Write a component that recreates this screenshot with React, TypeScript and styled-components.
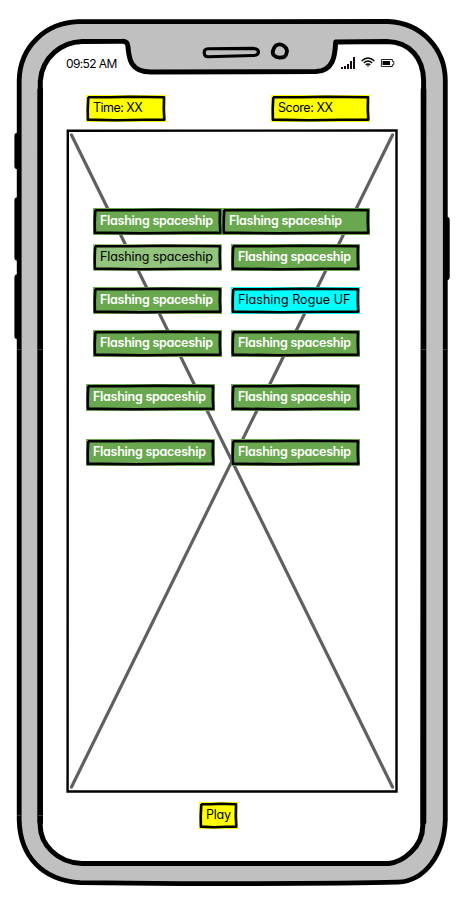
import React from "react";
import styled, { createGlobalStyle } from "styled-components";

const GlobalStyle = createGlobalStyle`
  body {
    margin: 0;
    background: #ffffff;
  }
  * {
    box-sizing: border-box;
  }
`;

const Phone = styled.main`
  position: relative;
  isolation: isolate;
  width: 471px;
  height: 911px;
  overflow: hidden;
  padding: 54px 73px 0 66px;
  display: flex;
  flex-direction: column;
  color: #000;
  font-family: Inter, "Liberation Sans", sans-serif;
  font-feature-settings: "cv11";
  font-size: 12.5px;
  line-height: 18px;
`;

const Backdrop = styled.svg`
  position: absolute;
  inset: 0;
  z-index: -1;
  width: 100%;
  height: 100%;
`;

const StatusBar = styled.header`
  display: flex;
  justify-content: space-between;
  height: 18px;
  margin-right: 3px;
`;

const Clock = styled.time`
  padding-top: 1px;
  font-size: 12px;
  letter-spacing: -0.62px;
`;

const StatusIcons = styled.div`
  display: flex;
  align-items: flex-start;
  gap: 5.5px;
  padding-top: 3px;
`;

const Readouts = styled.div`
  display: flex;
  justify-content: space-between;
  margin: 23px 28px 7px 20px;
`;

const Field = styled.section`
  position: relative;
  isolation: isolate;
  width: 332px;
  height: 664px;
  padding-top: 79px;
`;

const FleetRow = styled.div<{ $left: number; $gap: number; $after: number }>`
  display: flex;
  gap: ${(p) => p.$gap}px;
  margin: 0 0 ${(p) => p.$after}px ${(p) => p.$left}px;
`;

const LabelBox = styled.div<{ $fill: string; $width: number; $light?: boolean; $spacing: number }>`
  position: relative;
  isolation: isolate;
  flex: none;
  width: ${(p) => p.$width}px;
  height: 27px;
  padding: 4px 0 0 7px;
  background: ${(p) => p.$fill};
  color: ${(p) => (p.$light ? "#fff" : "#000")};
  font-weight: ${(p) => (p.$light ? 600 : 400)};
  letter-spacing: ${(p) => p.$spacing}px;
  white-space: nowrap;
`;

const Footer = styled.footer`
  display: flex;
  margin: 9px 0 0 133px;
`;

const GREEN = "#6aa84f";
const YELLOW = "#ffff00";

type LabelProps = {
  text: string;
  fill: string;
  width: number;
  light?: boolean;
  spacing: number;
};

function Label({ text, fill, width: w, light, spacing }: LabelProps) {
  return (
    <LabelBox $fill={fill} $width={w} $light={light} $spacing={spacing}>
      <Backdrop viewBox={`0 0 ${w} 27`} fill="none" stroke="#000" strokeWidth="2.6" strokeLinejoin="round">
        <path d={`M2 2.2 L${w * 0.3} 2.2 L${w * 0.55} 1.7 L${w - 2} 2.2 Q${w - 2.6} 14 ${w - 1.7} 24.6 L${w * 0.72} 24.7 L${w * 0.38} 25.3 L1.9 24.6 Q1.4 14 2.3 2.2`} />
      </Backdrop>
      {text}
    </LabelBox>
  );
}

const ship: LabelProps = { text: "Flashing spaceship", fill: GREEN, width: 129, light: true, spacing: -0.27 };
const fleet = [
  { left: 27, gap: 0, after: 9, items: [ship, { ...ship, width: 148 }] },
  { left: 27, gap: 9, after: 16, items: [{ ...ship, fill: "#93c47d", light: false, spacing: -0.1 }, ship] },
  { left: 27, gap: 9, after: 16, items: [ship, { text: "Flashing Rogue UF", fill: "#00ffff", width: 129, spacing: 0.06 }] },
  { left: 27, gap: 9, after: 27, items: [ship, ship] },
  { left: 20, gap: 16, after: 28, items: [ship, ship] },
  { left: 20, gap: 16, after: 0, items: [ship, ship] },
];

function PhoneOutline() {
  return (
    <Backdrop viewBox="0 0 471 911" stroke="#000" strokeLinejoin="round">
      <path
        d="M78 21.7 L388 21.5 C423 23 445 50 445.3 80 L445.3 820 C444 856 424 881 398 882.2 C350 883.5 250 883.7 180 883.6 L80 882.7 C42 880 20 856 19.2 820 L19.2 80 C20 47 45 23 78 21.7Z"
        fill="#c0c0c0"
        strokeWidth="4.8"
      />
      <path
        d="M82 41.5 L122 41.3 Q128 41 128 47 C129 58 130 72 151 72 L316 71.6 C333 71 335 57 335.7 42 L387 41.5 C411 42 423 59 423.6 80 L422.8 825 C423 848 402 862 389 863.5 L82 863.5 C57 863 40.5 844 40.2 826 L40.3 81 C42 57 62 42 82 41.5Z"
        fill="#fff"
        strokeWidth="5"
      />
      <path d="M40.2 90 V822 M423.5 90 V822" fill="none" strokeWidth="5.6" strokeLinecap="round" />
      <path d="M17.6 136 V166 M17.6 200.5 V257.5 M17.6 277.5 V336 M446.5 220 V277" fill="none" strokeWidth="6.4" strokeLinecap="round" />
      <path d="M208 48.8 L253 48.4 Q258.5 48.5 258.5 52 Q258.5 55.5 253 55.5 L208 56.8 Q204.3 56.7 204.2 52.7 Q204.1 49 208 48.8Z" fill="#c0c0c0" strokeWidth="3.1" />
      <path d="M278 44.6 C282 43.8 287 47 287 51.5 C286 57 284 57.6 279.5 57.6 C275 57.6 271.8 54.5 273 50.5 C274 47.5 275 45 278 44.6Z" fill="#c0c0c0" strokeWidth="3.8" />
      <path d="M17 349.5 H21.5 M38 349.5 H43 M17 815.5 H21.5 M38 815.5 H43 M421 349.5 H426 M443 349.5 H447.5" fill="none" stroke="#444" strokeWidth=".8" />
    </Backdrop>
  );
}

export default function App() {
  return (
    <>
      <GlobalStyle />
      <Phone>
        <PhoneOutline />
        <StatusBar>
          <Clock>09:52 AM</Clock>
          <StatusIcons>
            <svg width="15" height="13" viewBox="0 0 15 13" fill="#160818">
              <path d="M1 10h2v2H1zM4 9h2v3H4zM7 7h2v5H7zM10 4h2v8h-2zM13 0h2v12h-2z" />
            </svg>
            <svg width="14" height="11" viewBox="0 0 14 11" fill="none" stroke="#000" strokeWidth="1.4">
              <path d="M.6 4 Q7-2 13.4 4 M2.8 6.1 Q7 2 11.2 6.1 M4.8 8.1 Q7 6 9.2 8.1" />
              <path d="M5.8 8.5h2.4L7 10z" fill="#000" stroke="none" />
            </svg>
            <svg width="15" height="12" viewBox="0 0 15 12">
              <path d="M1.4 2.5H12.4V4.5H13.8V7.7H12.4V9.5H1.4Z" fill="none" stroke="#222" />
              <path d="M2.5 4H10V8H2.5Z" />
            </svg>
          </StatusIcons>
        </StatusBar>
        <Readouts>
          <Label text="Time: XX" fill={YELLOW} width={80} spacing={-0.55} />
          <Label text="Score: XX" fill={YELLOW} width={99} spacing={-0.45} />
        </Readouts>
        <Field>
          <Backdrop viewBox="0 0 332 664" fill="none" stroke="#000">
            <path d="M5.5 6 L326.5 658 M326.5 6 L5.5 658" stroke="#606060" strokeWidth="3.2" strokeLinecap="round" />
            <path d="M1.8 1.8 L330.5 1.5 V662.5 L1.6 662.5Z" strokeWidth="2.4" />
          </Backdrop>
          {fleet.map((row, i) => (
            <FleetRow key={i} $left={row.left} $gap={row.gap} $after={row.after}>
              {row.items.map((item, j) => (
                <Label key={j} {...item} />
              ))}
            </FleetRow>
          ))}
        </Field>
        <Footer>
          <Label text="Play" fill={YELLOW} width={39} spacing={-0.25} />
        </Footer>
      </Phone>
    </>
  );
}
